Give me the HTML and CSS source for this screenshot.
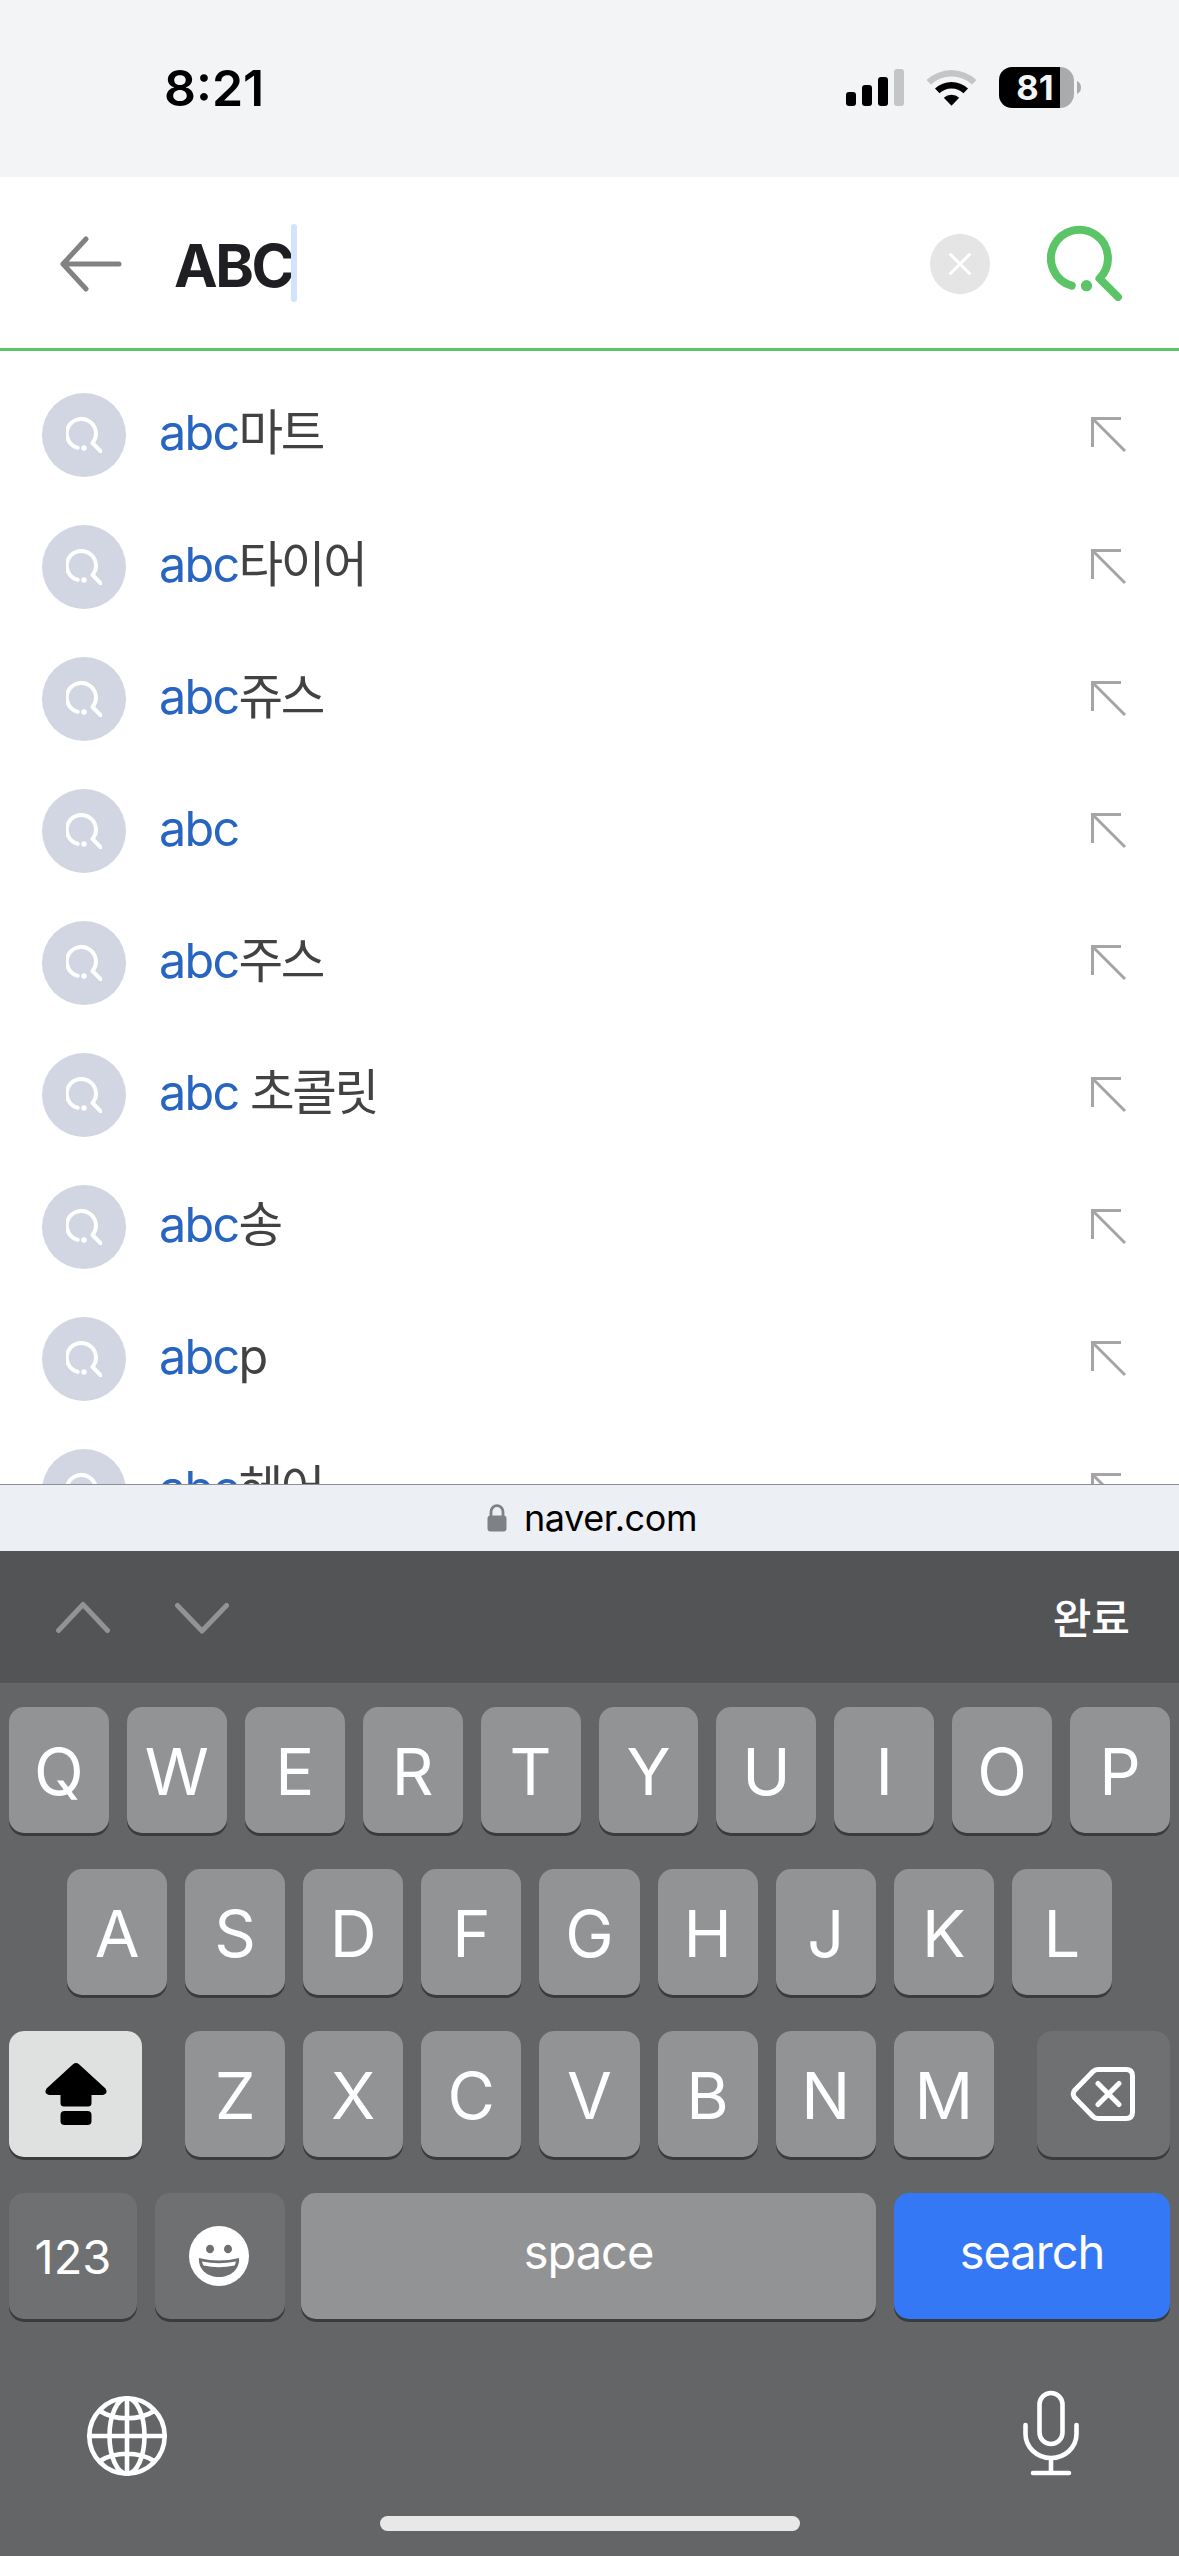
FILE: index.html
```html
<!DOCTYPE html>
<html lang="ko">
<head>
<meta charset="utf-8">
<title>NAVER</title>
<link rel="stylesheet" href="styles.css">
</head>
<body>
<svg width="0" height="0" class="defs">
  <symbol id="glass" viewBox="0 0 36 36">
    <path d="M11.700 30.700A14.600 14.600 0 1 1 26.500 26L35 34.600" fill="none" stroke="#fff" stroke-width="4" stroke-linecap="round" stroke-linejoin="round"/>
    <circle cx="18" cy="31" r="2.700" fill="#fff"/>
  </symbol>
  <symbol id="fill-arrow" viewBox="0 0 36 36">
    <path d="M1.500 30V1.500H30M1.500 1.500L34 34" fill="none" stroke="#a5a5a7" stroke-width="3"/>
  </symbol>
</svg>
<header class="status">
  <span class="time">8:21</span>
  <svg class="status-icons" width="240" height="46" viewBox="0 0 240 46">
    <g transform="translate(0 2)">
      <rect x="6" y="25" width="10" height="14" rx="3"/>
      <rect x="22" y="18" width="10" height="21" rx="3"/>
      <rect x="38" y="10" width="10" height="29" rx="3"/>
      <rect x="54" y="2" width="10" height="37" rx="3" fill="#c4c5c7"/>
    </g>
    <g transform="translate(111.500 41)">
      <path d="M-25-26A36.500 36.500 0 0 1 25-26L20.500-21.500A30 30 0 0 0-20.500-21.500Z" fill="#c4c5c7"/>
      <path d="M-16.500-17.500A24.300 24.300 0 0 1 16.500-17.500L12-12.800A17.500 17.500 0 0 0-12-12.800Z"/>
      <path d="M-7.700-8.300A11.500 11.500 0 0 1 7.700-8.300L0-.2Z"/>
    </g>
    <path d="M220 2V43H172A13 13 0 0 1 159 30V15A13 13 0 0 1 172 2Z"/>
    <path d="M220 2A14 14 0 0 1 234 16V29A14 14 0 0 1 220 43Z" fill="#aaabad"/>
    <path d="M237 16Q241 18 241 22.500T237 29Z" fill="#aaabad"/>
    <text x="195" y="35" class="battery">81</text>
  </svg>
</header>
<div class="searchbar">
  <svg class="back" width="64" height="56" viewBox="0 0 64 56"><path d="M27 3L4 28L27 53M4 28H60" fill="none" stroke="#828282" stroke-width="5" stroke-linecap="round" stroke-linejoin="round"/></svg>
  <div class="query">ABC<i class="caret"></i></div>
  <svg class="clear" width="60" height="60" viewBox="0 0 60 60"><circle cx="30" cy="30" r="30" fill="#e5e5e5"/><path d="M20.500 20.500L39.500 39.500M39.500 20.500L20.500 39.500" stroke="#fff" stroke-width="3" stroke-linecap="round"/></svg>
  <svg class="go" width="76" height="76" viewBox="0 0 76 76"><path d="M24.700 60.700A28.500 28.500 0 1 1 52.500 53.500L71 72" fill="none" stroke="#5ac467" stroke-width="8" stroke-linecap="round" stroke-linejoin="round"/><circle cx="39.500" cy="60.700" r="5.600" fill="#5ac467"/></svg>
</div>
<ul class="list">
  <li><span class="badge"><svg><use href="#glass"/></svg></span><p><b>abc</b>마트</p><svg class="fill"><use href="#fill-arrow"/></svg></li>
  <li><span class="badge"><svg><use href="#glass"/></svg></span><p><b>abc</b>타이어</p><svg class="fill"><use href="#fill-arrow"/></svg></li>
  <li><span class="badge"><svg><use href="#glass"/></svg></span><p><b>abc</b>쥬스</p><svg class="fill"><use href="#fill-arrow"/></svg></li>
  <li><span class="badge"><svg><use href="#glass"/></svg></span><p><b>abc</b></p><svg class="fill"><use href="#fill-arrow"/></svg></li>
  <li><span class="badge"><svg><use href="#glass"/></svg></span><p><b>abc</b>주스</p><svg class="fill"><use href="#fill-arrow"/></svg></li>
  <li><span class="badge"><svg><use href="#glass"/></svg></span><p><b>abc</b> 초콜릿</p><svg class="fill"><use href="#fill-arrow"/></svg></li>
  <li><span class="badge"><svg><use href="#glass"/></svg></span><p><b>abc</b>송</p><svg class="fill"><use href="#fill-arrow"/></svg></li>
  <li><span class="badge"><svg><use href="#glass"/></svg></span><p><b>abc</b>p</p><svg class="fill"><use href="#fill-arrow"/></svg></li>
  <li><span class="badge"><svg><use href="#glass"/></svg></span><p><b>abc</b>헤어</p><svg class="fill"><use href="#fill-arrow"/></svg></li>
</ul>
<div class="address">
  <svg width="20" height="28" viewBox="0 0 20 28"><rect x="0.500" y="11.500" width="19" height="16" rx="3" fill="#808186"/><path d="M4 13V8A6 6.300 0 0 1 16 8V13" fill="none" stroke="#808186" stroke-width="2.800"/></svg>
  <span>naver.com</span>
</div>
<div class="toolbar">
  <svg width="54" height="34" viewBox="0 0 54 34"><path d="M2.500 30.500L27 4.500L51.500 30.500" class="chev"/></svg>
  <svg width="54" height="34" viewBox="0 0 54 34"><path d="M2.500 5.500L27 31L51.500 5.500" class="chev"/></svg>
  <span class="done">완료</span>
</div>
<div class="keyboard">
  <div class="row"><kbd>Q</kbd><kbd>W</kbd><kbd>E</kbd><kbd>R</kbd><kbd>T</kbd><kbd>Y</kbd><kbd>U</kbd><kbd>I</kbd><kbd>O</kbd><kbd>P</kbd></div>
  <div class="row inset"><kbd>A</kbd><kbd>S</kbd><kbd>D</kbd><kbd>F</kbd><kbd>G</kbd><kbd>H</kbd><kbd>J</kbd><kbd>K</kbd><kbd>L</kbd></div>
  <div class="row">
    <kbd class="shift"><svg width="62" height="62" viewBox="0 0 62 62"><path d="M28 1.200Q31-1 34 1.200L60.500 25.500Q63.500 30.500 58 32H46.500V40Q46.500 43.500 43 43.500H19Q15.500 43.500 15.500 40V32H4Q-1.500 30.500 1.500 25.500Z"/><rect x="15.500" y="48" width="31" height="14" rx="4"/></svg></kbd>
    <kbd>Z</kbd><kbd>X</kbd><kbd>C</kbd><kbd>V</kbd><kbd>B</kbd><kbd>N</kbd><kbd>M</kbd>
    <kbd class="delete"><svg width="66" height="56" viewBox="0 0 66 56"><path d="M28 3.500H56Q62.500 3.500 62.500 10V46Q62.500 52.500 56 52.500H28Q25 52.500 23 50.500L4.500 31.500Q2 28 4.500 24.500L23 5.500Q25 3.500 28 3.500ZM28 17.500L49 38.500M49 17.500L28 38.500"/></svg></kbd>
  </div>
  <div class="row">
    <kbd class="num">123</kbd>
    <kbd class="emoji"><svg width="60" height="60" viewBox="0 0 60 60"><circle cx="30" cy="30" r="30" fill="#fff"/><g fill="#6f7072"><ellipse cx="21" cy="23" rx="4" ry="4.300"/><ellipse cx="39" cy="23" rx="4" ry="4.300"/><path d="M10 32Q30 37 50 32C51 43 42 51 30 51S9 43 10 32Z"/></g><path d="M13 35.500Q30 39 47 35.500Q46.500 38 45.500 39.500Q30 43 14.500 39.500Q13.500 38 13 35.500Z" fill="#fff"/></svg></kbd>
    <kbd class="space">space</kbd>
    <kbd class="search">search</kbd>
  </div>
  <div class="dock">
    <svg width="80" height="80" viewBox="0 0 80 80" class="line"><circle cx="40" cy="40" r="37.700"/><ellipse cx="40" cy="40" rx="17.500" ry="37.700"/><path d="M40 2V78M2 40H78M13 15Q24 22.300 40 22.300T67 15M13 65Q24 57.700 40 57.700T67 65"/></svg>
    <svg width="56" height="86" viewBox="0 0 56 86" class="line mic"><rect x="16.500" y="3" width="23" height="51" rx="11.500"/><path d="M2.500 35V44A25.500 24 0 0 0 53.500 44V35M28 68V83M10 83H46"/></svg>
  </div>
  <div class="home"></div>
</div>
</body>
</html>
```
FILE: styles.css
```css
* { box-sizing: border-box; }
body {
  margin: 0;
  width: 1179px;
  height: 2556px;
  overflow: hidden;
  display: flex;
  flex-direction: column;
  background: #fff;
  font-family: Inter, "Noto Sans CJK KR", sans-serif;
}
svg { display: block; flex: none; }
.defs { position: absolute; }

.status {
  height: 177px;
  flex: none;
  display: flex;
  justify-content: space-between;
  padding: 57px 99px 0 164px;
  background: #f3f4f6;
}
.time { font-size: 50px; line-height: 62px; font-weight: 600; letter-spacing: 0; }
.status-icons { margin-top: 8px; overflow: visible; }
.battery { font-size: 34.500px; font-weight: 700; fill: #f3f4f6; text-anchor: middle; }

.searchbar {
  height: 174px;
  flex: none;
  display: flex;
  align-items: center;
  padding: 0 56px 0 59px;
  border-bottom: 3px solid #5ac467;
}
.back { margin-top: 2px; }
.query {
  flex: 1;
  display: flex;
  align-items: center;
  margin-left: 51px;
  padding-top: 5px;
  font-size: 58.500px;
  font-weight: 700;
  letter-spacing: -2.400px;
  color: #1e1e23;
}
.caret { width: 6px; height: 78px; margin: -5px 0 0 -1px; border-radius: 3px; background: #d3e3fd; }
.clear { margin: 2px 57px 0 0; }

.list {
  height: 1133px;
  flex: none;
  overflow: hidden;
  margin: 0;
  padding: 18px 52px 0 42px;
  list-style: none;
}
.list li { height: 132px; display: flex; align-items: center; }
.badge {
  width: 84px;
  height: 84px;
  border-radius: 50%;
  background: #d2d6e3;
  display: flex;
  align-items: center;
  justify-content: center;
}
.badge svg { width: 36px; height: 36px; overflow: visible; }
.list p { flex: 1; margin: 0 0 5px 33px; font-size: 48.500px; line-height: 60px; letter-spacing: -2.300px; color: #424242; }
.list b { font-weight: 400; color: #2865c0; letter-spacing: -1.700px; }
.fill { width: 36px; height: 36px; }

.address {
  height: 67px;
  flex: none;
  display: flex;
  align-items: center;
  justify-content: center;
  gap: 17px;
  padding-left: 5px;
  border-top: 1px solid #8e8e93;
  background: #eceff4;
  color: #000;
  font-size: 36px;
  letter-spacing: -0.400px;
}

.toolbar {
  height: 132px;
  flex: none;
  display: flex;
  align-items: center;
  gap: 65px;
  padding: 0 49px 0 56px;
  background: #535456;
}
.chev { fill: none; stroke: #929395; stroke-width: 5; stroke-linecap: round; stroke-linejoin: round; }
.done { margin: -4px 0 0 auto; color: #fff; font-size: 42px; font-weight: 500; }

.keyboard {
  flex: 1;
  display: flex;
  flex-direction: column;
  gap: 36px;
  padding: 24px 9px 0;
  background: #646567;
}
.row { display: flex; gap: 18px; height: 126px; }
.row.inset { padding: 0 58px; }
kbd {
  flex: 1 1 0;
  display: flex;
  align-items: center;
  justify-content: center;
  padding-top: 2px;
  border-radius: 15px;
  background: #929395;
  box-shadow: 0 3px 0 #3a3b3d;
  color: #fff;
  font-family: Inter, sans-serif;
  font-size: 65px;
  font-weight: 400;
}
.shift { flex: 0 0 133px; margin-right: 25px; background: #dfe1e0; padding: 0; }
.shift svg { overflow: visible; }
.delete { flex: 0 0 133px; margin-left: 25px; background: #6f7072; padding: 0; }
.delete path, .line { fill: none; stroke: #fff; stroke-width: 5; stroke-linecap: round; stroke-linejoin: round; }
.num { flex: 0 0 128px; background: #6f7072; font-size: 47px; padding: 0; }
.emoji { flex: 0 0 130px; background: #6f7072; padding: 0 2px 0 0; }
.space { font-size: 47px; letter-spacing: -1px; margin-left: -2px; padding: 0 0 9px; }
.search { flex: 0 0 276px; background: #3478f6; font-size: 47px; letter-spacing: -1px; padding: 0 0 9px; }
.dock { display: flex; justify-content: space-between; padding: 41px 91px 0 78px; }
.dock .line { stroke-width: 4.600; }
.mic { margin-top: -6px; }
.home { width: 420px; height: 15px; margin: 4px auto 0; border-radius: 8px; background: #e8e8e8; }
```
